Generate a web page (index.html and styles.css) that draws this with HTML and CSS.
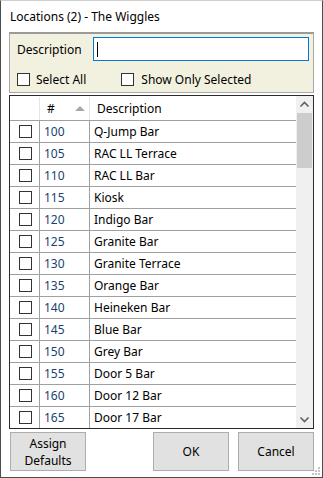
FILE: index.html
```html
<html>
<head>
<title>Locations (2) - The Wiggles</title>
<link rel="stylesheet" href="styles.css">
</head>
<body>
<div class="window">

	<div class="titlebar">Locations (2) - The Wiggles</div>

	<div class="filter">
		<div class="filterRow">
			<label class="descLabel">Description</label>
			<div class="descInput"><span class="caret"></span></div>
		</div>
		<div class="filterRow checks">
			<label class="check"><span class="box"></span>Select All</label>
			<label class="check"><span class="box"></span>Show Only Selected</label>
		</div>
	</div>

	<div class="grid">
		<div class="gridBody">
			<div class="row header">
				<div class="cell c1"></div>
				<div class="cell c2"><span>#</span><span class="sortArrow"></span></div>
				<div class="cell c3">Description</div>
			</div>
			<div class="row"><div class="cell c1"><span class="box"></span></div><div class="cell c2">100</div><div class="cell c3">Q-Jump Bar</div></div>
			<div class="row"><div class="cell c1"><span class="box"></span></div><div class="cell c2">105</div><div class="cell c3">RAC LL Terrace</div></div>
			<div class="row"><div class="cell c1"><span class="box"></span></div><div class="cell c2">110</div><div class="cell c3">RAC LL Bar</div></div>
			<div class="row"><div class="cell c1"><span class="box"></span></div><div class="cell c2">115</div><div class="cell c3">Kiosk</div></div>
			<div class="row"><div class="cell c1"><span class="box"></span></div><div class="cell c2">120</div><div class="cell c3">Indigo Bar</div></div>
			<div class="row"><div class="cell c1"><span class="box"></span></div><div class="cell c2">125</div><div class="cell c3">Granite Bar</div></div>
			<div class="row"><div class="cell c1"><span class="box"></span></div><div class="cell c2">130</div><div class="cell c3">Granite Terrace</div></div>
			<div class="row"><div class="cell c1"><span class="box"></span></div><div class="cell c2">135</div><div class="cell c3">Orange Bar</div></div>
			<div class="row"><div class="cell c1"><span class="box"></span></div><div class="cell c2">140</div><div class="cell c3">Heineken Bar</div></div>
			<div class="row"><div class="cell c1"><span class="box"></span></div><div class="cell c2">145</div><div class="cell c3">Blue Bar</div></div>
			<div class="row"><div class="cell c1"><span class="box"></span></div><div class="cell c2">150</div><div class="cell c3">Grey Bar</div></div>
			<div class="row"><div class="cell c1"><span class="box"></span></div><div class="cell c2">155</div><div class="cell c3">Door 5 Bar</div></div>
			<div class="row"><div class="cell c1"><span class="box"></span></div><div class="cell c2">160</div><div class="cell c3">Door 12 Bar</div></div>
			<div class="row"><div class="cell c1"><span class="box"></span></div><div class="cell c2">165</div><div class="cell c3">Door 17 Bar</div></div>
		</div>
		<div class="scrollbar">
			<svg class="arrow" width="17" height="17" viewBox="0 0 17 17"><path d="M4.5 10.5 L8.5 6.5 L12.5 10.5" fill="none" stroke="#606060" stroke-width="1.6"/></svg>
			<div class="track"><div class="thumb"></div></div>
			<svg class="arrow" width="17" height="17" viewBox="0 0 17 17"><path d="M4.5 6.5 L8.5 10.5 L12.5 6.5" fill="none" stroke="#606060" stroke-width="1.6"/></svg>
		</div>
	</div>

	<div class="buttonBar">
		<button type="button" class="btn assign"><span>Assign</span><span>Defaults</span></button>
		<div class="spacer"></div>
		<button type="button" class="btn">OK</button>
		<button type="button" class="btn">Cancel</button>
	</div>

	<svg class="grip" width="10" height="10" viewBox="0 0 10 10">
		<rect x="7" y="1" width="2" height="2" fill="#c4c4c4"/>
		<rect x="4" y="4" width="2" height="2" fill="#c4c4c4"/>
		<rect x="7" y="4" width="2" height="2" fill="#c4c4c4"/>
		<rect x="1" y="7" width="2" height="2" fill="#c4c4c4"/>
		<rect x="4" y="7" width="2" height="2" fill="#c4c4c4"/>
		<rect x="7" y="7" width="2" height="2" fill="#c4c4c4"/>
	</svg>
</div>
</body>
</html>
```

FILE: styles.css
```css
body {margin: 0; font-family: "Noto Sans", "Open Sans", sans-serif; font-size: 12px; color: #000;}

.window {
		position: relative;
		width: 323px;
		height: 478px;
		box-sizing: border-box;
		border: 1px solid #4c4c4c;
		border-top-color: #d0d0d0;
		background-color: #fff;
		padding: 0 8px;
		display: flex;
		flex-direction: column;
}

.titlebar {height: 31px; line-height: 31px; padding-left: 1px;}

/* Filter panel */
.filter {
		height: 61px;
		box-sizing: border-box;
		border: 1px solid #a8a8a8;
		border-top: 2px solid #9a9a9a;
		background-color: #f2f1df;
		padding: 3px 4px 0 7px;
}
.filterRow {display: flex; align-items: center;}
.descLabel {width: 76px;}
.descInput {flex: 1; height: 24px; box-sizing: border-box; border: 1px solid #0078d7; background: #fff; display: flex; align-items: center; padding-left: 3px;}
.caret {width: 1px; height: 15px; background: #000;}
.checks {margin-top: 6px; height: 24px;}
.check {display: flex; align-items: center; gap: 6px; margin-right: 35px;}
.check:nth-child(2) {gap: 7px;}
.box {display: inline-block; width: 13px; height: 13px; box-sizing: border-box; border: 1px solid #333; background: #fff;}

/* Grid */
.grid {
		margin-top: 2px;
		height: 334px;
		box-sizing: border-box;
		border: 1px solid #2b2b2b;
		display: flex;
		overflow: hidden;
}
.gridBody {flex: 1; overflow: hidden;}
.row {display: flex; height: 22px; box-sizing: border-box; border-bottom: 1px solid #a0a0a0;}
.row.header {height: 25px; padding-top: 1px;}
.cell {display: flex; align-items: center; box-sizing: border-box; border-right: 1px solid #a0a0a0;}
.header .cell {border-right-color: #e5e5e5;}
.c1 {width: 30px; justify-content: center;}
.c2 {width: 50px; padding-left: 4px; color: #203f6e;}
.header .c2 {color: #000; padding-left: 7px; justify-content: space-between; padding-right: 4px;}
.c3 {flex: 1; padding-left: 4px; border-right: none;}
.header .c3 {padding-left: 7px;}
.row .c1 .box {margin-left: 1px;}
.sortArrow {width: 0; height: 0; border-left: 5px solid transparent; border-right: 5px solid transparent; border-bottom: 5px solid #a8a8a8; margin-top: -1px;}

.scrollbar {width: 17px; background: #f0f0f0; display: flex; flex-direction: column;}
.arrow {display: block;}
.track {flex: 1; padding: 0 1px;}
.thumb {height: 55px; background: #cdcdcd;}

/* Buttons */
.buttonBar {display: flex; margin-top: 3px; height: 39px; gap: 9px; padding-left: 1px;}
.spacer {flex: 1;}
.btn {
		width: 76px;
		height: 39px;
		font-family: "Noto Sans", "Open Sans", sans-serif;
		font-size: 12px;
		color: #000;
		background-color: #e1e1e1;
		border: 1px solid #adadad;
		padding: 0;
}
.btn.assign {display: flex; flex-direction: column; align-items: center; justify-content: center; line-height: 17px;}

.grip {position: absolute; right: 1px; bottom: 1px;}
```
